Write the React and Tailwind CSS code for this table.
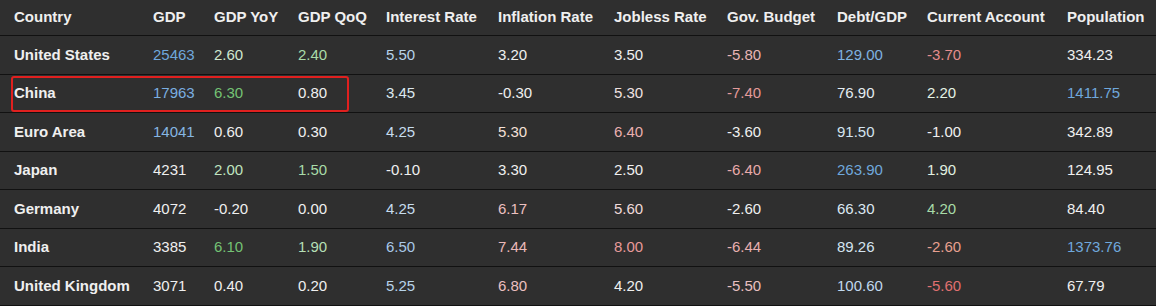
import React from "react";

const W = "#efefef";

const columns = [
  { label: "Country", w: "w-[139px]" },
  { label: "GDP", w: "w-[61px]" },
  { label: "GDP YoY", w: "w-[84px]" },
  { label: "GDP QoQ", w: "w-[88px]" },
  { label: "Interest Rate", w: "w-[112px]" },
  { label: "Inflation Rate", w: "w-[116px]" },
  { label: "Jobless Rate", w: "w-[113px]" },
  { label: "Gov. Budget", w: "w-[110px]" },
  { label: "Debt/GDP", w: "w-[90px]" },
  { label: "Current Account", w: "w-[140px]" },
  { label: "Population", w: "w-[103px]" },
];

// each value: [text, colour]
const rows = [
  {
    name: "United States",
    cells: [
      ["25463", "#6fa8dc"], ["2.60", "#cfe8cf"], ["2.40", "#a9dba9"], ["5.50", "#b7d3ea"],
      ["3.20", W], ["3.50", W], ["-5.80", "#e8b5b5"], ["129.00", "#7fb2e0"],
      ["-3.70", "#e48c8c"], ["334.23", W],
    ],
  },
  {
    name: "China",
    highlight: true,
    cells: [
      ["17963", "#7aaee0"], ["6.30", "#74c274"], ["0.80", W], ["3.45", "#dce8f0"],
      ["-0.30", W], ["5.30", "#f0e2e2"], ["-7.40", "#e49a9a"], ["76.90", "#e4ecf2"],
      ["2.20", "#e4f2e4"], ["1411.75", "#6fa8dc"],
    ],
  },
  {
    name: "Euro Area",
    cells: [
      ["14041", "#86b6e2"], ["0.60", W], ["0.30", W], ["4.25", "#c6dcee"],
      ["5.30", "#f4e0d8"], ["6.40", "#eab0b0"], ["-3.60", W], ["91.50", "#d4e4f0"],
      ["-1.00", W], ["342.89", W],
    ],
  },
  {
    name: "Japan",
    cells: [
      ["4231", W], ["2.00", "#bfe3bf"], ["1.50", "#a8dba8"], ["-0.10", W],
      ["3.30", W], ["2.50", W], ["-6.40", "#e8aaaa"], ["263.90", "#6fa8dc"],
      ["1.90", "#e0f0e0"], ["124.95", W],
    ],
  },
  {
    name: "Germany",
    cells: [
      ["4072", W], ["-0.20", W], ["0.00", W], ["4.25", "#c6dcee"],
      ["6.17", "#ecc0c0"], ["5.60", "#f0dada"], ["-2.60", W], ["66.30", "#dce8f2"],
      ["4.20", "#a8dba8"], ["84.40", W],
    ],
  },
  {
    name: "India",
    cells: [
      ["3385", W], ["6.10", "#74c274"], ["1.90", "#b5dfb5"], ["6.50", "#a8c8e8"],
      ["7.44", "#eab8b8"], ["8.00", "#e89a9a"], ["-6.44", "#e8b0b0"], ["89.26", "#d4e4f0"],
      ["-2.60", "#e8a090"], ["1373.76", "#6fa8dc"],
    ],
  },
  {
    name: "United Kingdom",
    cells: [
      ["3071", W], ["0.40", W], ["0.20", W], ["5.25", "#b7d3ea"],
      ["6.80", "#ecc0c0"], ["4.20", W], ["-5.50", "#e8c0c0"], ["100.60", "#c0d8ee"],
      ["-5.60", "#e07070"], ["67.79", W],
    ],
  },
];

export default function App() {
  return (
    <div
      className="w-[1156px] h-[306px] bg-[#2f2f2f] text-[15px] text-[#efefef] overflow-hidden"
      style={{ fontFamily: '"Liberation Sans", Arial, sans-serif' }}
    >
      <div className="flex h-[36px] items-center border-b border-[#111111] font-bold">
        {columns.map((c) => (
          <div key={c.label} className={`${c.w} shrink-0 pl-[14px] whitespace-nowrap`}>
            {c.label}
          </div>
        ))}
      </div>
      {rows.map((r) => (
        <div
          key={r.name}
          className="relative flex h-[38.5px] items-center border-b border-[#111111]"
        >
          <div className="w-[139px] shrink-0 pl-[14px] font-bold whitespace-nowrap">{r.name}</div>
          {r.cells.map(([v, color], i) => (
            <div
              key={i}
              className={`${columns[i + 1].w} shrink-0 pl-[14px] whitespace-nowrap`}
              style={{ color }}
            >
              {v}
            </div>
          ))}
          {r.highlight && (
            <div className="absolute left-[11px] top-[1px] w-[338px] h-[36px] border-2 border-[#e0201f] rounded-[3px]" />
          )}
        </div>
      ))}
    </div>
  );
}
